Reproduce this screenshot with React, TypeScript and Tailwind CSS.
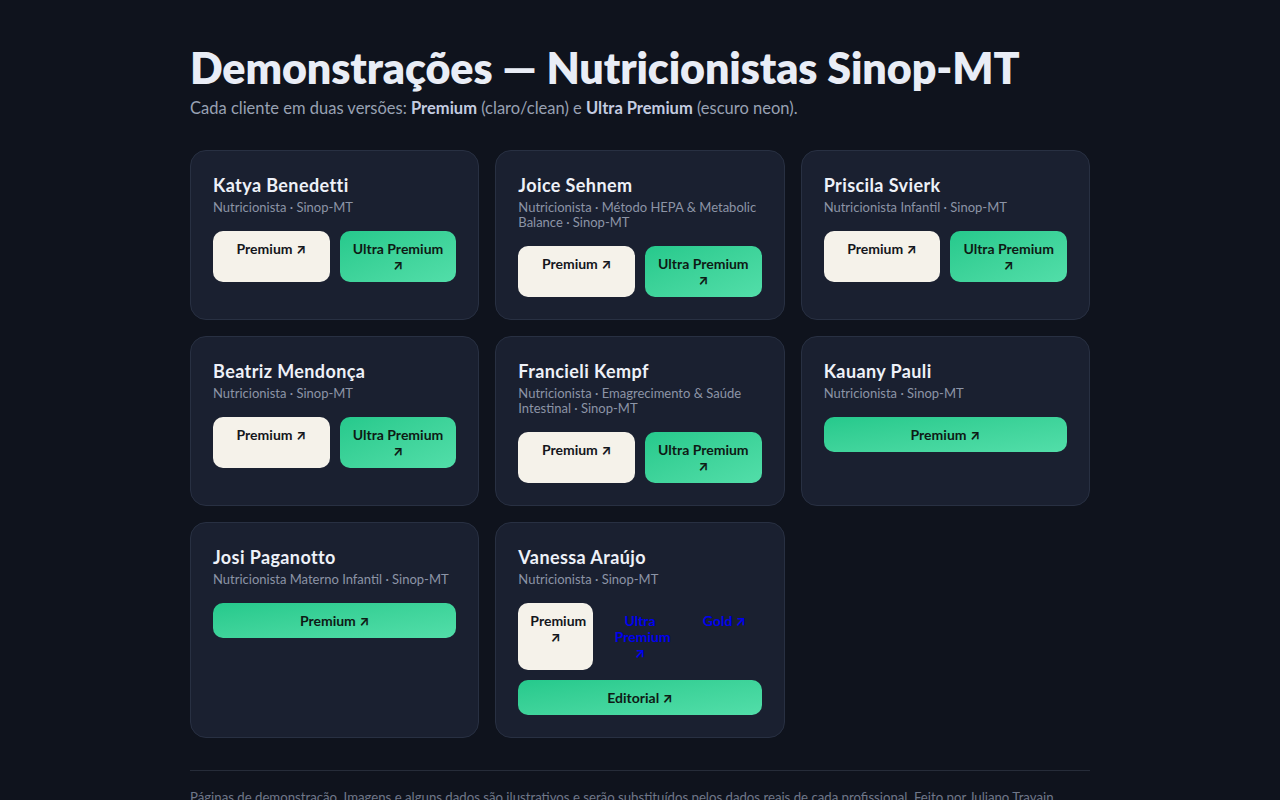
import React from "react";

type Btn = { label: string; kind: "cream" | "green" | "plain"; full?: boolean };
type Client = { name: string; sub: string; cols: number; buttons: Btn[]; extra?: Btn };

const clients: Client[] = [
  { name: "Katya Benedetti", sub: "Nutricionista · Sinop-MT", cols: 2, buttons: [{ label: "Premium", kind: "cream" }, { label: "Ultra Premium", kind: "green" }] },
  { name: "Joice Sehnem", sub: "Nutricionista · Método HEPA & Metabolic Balance · Sinop-MT", cols: 2, buttons: [{ label: "Premium", kind: "cream" }, { label: "Ultra Premium", kind: "green" }] },
  { name: "Priscila Svierk", sub: "Nutricionista Infantil · Sinop-MT", cols: 2, buttons: [{ label: "Premium", kind: "cream" }, { label: "Ultra Premium", kind: "green" }] },
  { name: "Beatriz Mendonça", sub: "Nutricionista · Sinop-MT", cols: 2, buttons: [{ label: "Premium", kind: "cream" }, { label: "Ultra Premium", kind: "green" }] },
  { name: "Francieli Kempf", sub: "Nutricionista · Emagrecimento & Saúde Intestinal · Sinop-MT", cols: 2, buttons: [{ label: "Premium", kind: "cream" }, { label: "Ultra Premium", kind: "green" }] },
  { name: "Kauany Pauli", sub: "Nutricionista · Sinop-MT", cols: 1, buttons: [{ label: "Premium", kind: "green" }] },
  { name: "Josi Paganotto", sub: "Nutricionista Materno Infantil · Sinop-MT", cols: 1, buttons: [{ label: "Premium", kind: "green" }] },
  { name: "Vanessa Araújo", sub: "Nutricionista · Sinop-MT", cols: 3, buttons: [{ label: "Premium", kind: "cream" }, { label: "Ultra Premium", kind: "plain" }, { label: "Gold", kind: "plain" }], extra: { label: "Editorial", kind: "green" } },
];

function Button({ b }: { b: Btn }) {
  const base = "block rounded-[10px] px-3 py-[9.5px] text-center text-[14px] leading-4 font-bold";
  const cls =
    b.kind === "cream"
      ? "bg-[#f5f2ea] text-[#14161c]"
      : b.kind === "green"
      ? "bg-gradient-to-br from-[#25c98c] to-[#52dea9] text-[#0e1a15]"
      : "text-[#0000ee]";
  return (
    <a href="#" className={`${base} ${cls}`}>
      {b.label} <span className="text-[13px] [font-family:Inter,sans-serif]">↗</span>
    </a>
  );
}

function Card({ c }: { c: Client }) {
  const grid = c.cols === 3 ? "grid-cols-3" : c.cols === 2 ? "grid-cols-2" : "grid-cols-1";
  return (
    <div className="rounded-[16px] border border-[#283042] bg-[#1a2030] p-[22px]">
      <div className="text-[18px] leading-6 font-bold text-[#eef1f8] tracking-[0.4px]">{c.name}</div>
      <div className="mt-[3px] text-[13px] leading-[15px] text-[#8c94a6]">{c.sub}</div>
      <div className={`mt-4 grid ${grid} gap-[10px]`}>
        {c.buttons.map((b) => (
          <Button key={b.label} b={b} />
        ))}
      </div>
      {c.extra && (
        <div className="mt-[10px]">
          <Button b={c.extra} />
        </div>
      )}
    </div>
  );
}

export default function App() {
  return (
    <div className="min-h-screen bg-[#0f131d] [font-family:Lato,'Noto_Sans',sans-serif]">
      <div className="mx-auto w-[900px] pt-11 pb-10">
        <h1 className="text-[43px] leading-[48px] font-extrabold text-[#e9edf6] tracking-[-0.1px]">
          Demonstrações — Nutricionistas Sinop-MT
        </h1>
        <p className="mt-1 text-[16.5px] leading-6 text-[#98a1b3]">
          Cada cliente em duas versões: <strong className="font-bold text-[#c4cce0]">Premium</strong> (claro/clean) e{" "}
          <strong className="font-bold text-[#c4cce0]">Ultra Premium</strong> (escuro neon).
        </p>
        <div className="mt-[30px] grid grid-cols-3 gap-4">
          {clients.map((c) => (
            <Card key={c.name} c={c} />
          ))}
        </div>
        <div className="mt-8 border-t border-[#262c39] pt-4">
          <p className="text-[13.2px] leading-5 text-[#6f7789]">
            Páginas de demonstração. Imagens e alguns dados são ilustrativos e serão substituídos pelos dados reais de cada profissional. Feito por Juliano Travain.
          </p>
        </div>
      </div>
    </div>
  );
}
